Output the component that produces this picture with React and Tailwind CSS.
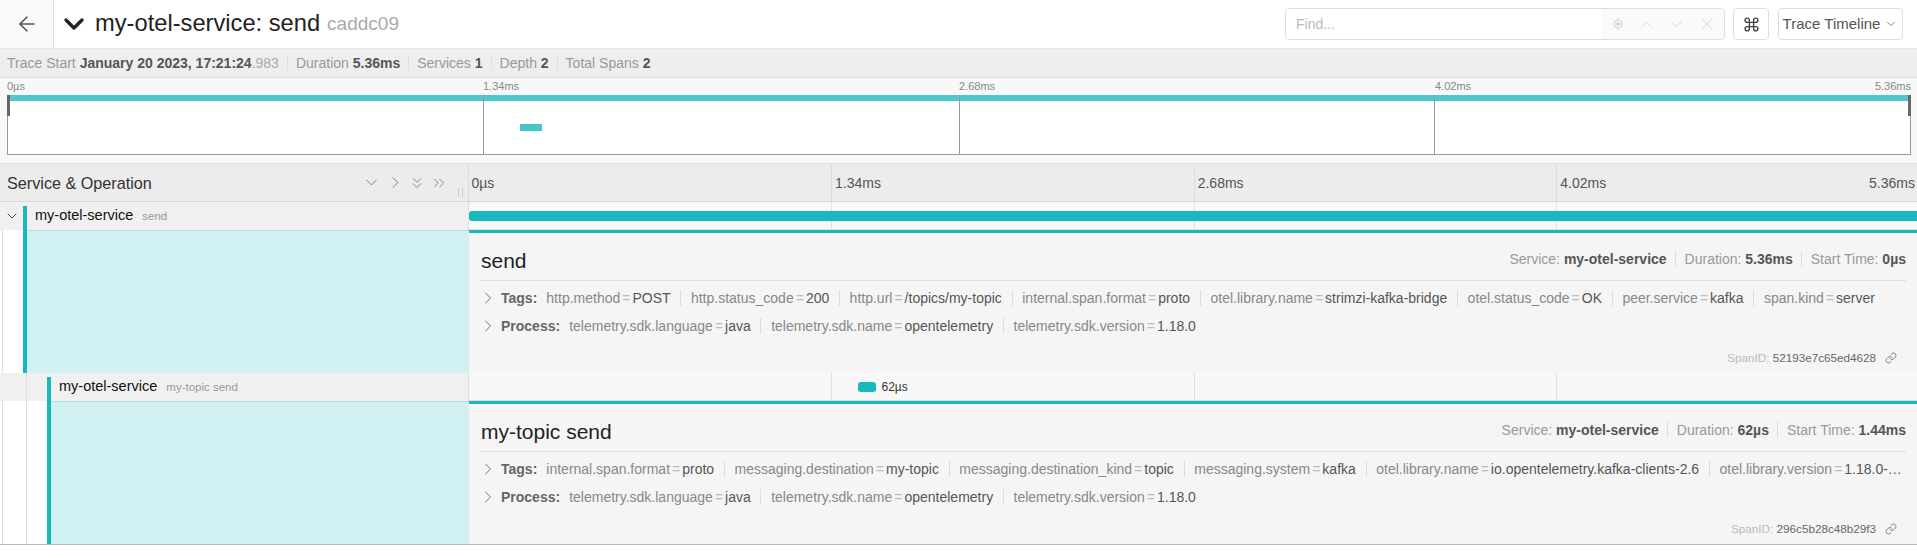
import React from 'react'
import { ChevronDown, ChevronRight, ChevronsDown, ChevronsRight, ChevronUp, X, ArrowLeft, Command, Link } from 'lucide-react'

const ticks = ['0µs', '1.34ms', '2.68ms', '4.02ms']

const spans = [
  {
    name: 'send',
    depth: 0,
    service: 'my-otel-service',
    duration: '5.36ms',
    start: '0µs',
    spanId: '52193e7c65ed4628',
    tags: [
      ['http.method', 'POST'],
      ['http.status_code', '200'],
      ['http.url', '/topics/my-topic'],
      ['internal.span.format', 'proto'],
      ['otel.library.name', 'strimzi-kafka-bridge'],
      ['otel.status_code', 'OK'],
      ['peer.service', 'kafka'],
      ['span.kind', 'server'],
    ],
  },
  {
    name: 'my-topic send',
    depth: 1,
    service: 'my-otel-service',
    duration: '62µs',
    start: '1.44ms',
    spanId: '296c5b28c48b29f3',
    tags: [
      ['internal.span.format', 'proto'],
      ['messaging.destination', 'my-topic'],
      ['messaging.destination_kind', 'topic'],
      ['messaging.system', 'kafka'],
      ['otel.library.name', 'io.opentelemetry.kafka-clients-2.6'],
      ['otel.library.version', '1.18.0-…'],
    ],
  },
]

const processTags = [
  ['telemetry.sdk.language', 'java'],
  ['telemetry.sdk.name', 'opentelemetry'],
  ['telemetry.sdk.version', '1.18.0'],
]

const Stat = ({ label, value, muted, last }) => (
  <span className={`px-[8px] first:pl-0 leading-[14px] ${last ? '' : 'border-r border-[#e0e0e0]'}`}>
    <span className="text-[#999]">{label} </span>
    <b className="font-bold text-[#555]">{value}</b>
    {muted && <span className="text-[#aaa]">{muted}</span>}
  </span>
)

const TickLines = ({ color = 'border-[#ddd]', col = 'flex-1' }) => (
  <div className="absolute inset-0 flex pointer-events-none">
    {ticks.map((t, i) => (
      <div key={t} className={`${col} ${i === 0 ? '' : `border-l ${color}`}`} />
    ))}
  </div>
)

const KeyValues = ({ label, items }) => (
  <div className="flex items-center h-[28px] text-[14px] leading-[16px]">
    <ChevronRight size={20} strokeWidth={1} className="text-[#555] shrink-0 ml-[-3px] mr-[3px]" />
    <b className="font-bold text-[#666] shrink-0 mr-[9px]">{label}:</b>
    <div className="flex min-w-0">
      {items.map(([k, v], i) => (
        <span
          key={k}
          className={`px-[9.7px] first:pl-0 whitespace-nowrap shrink-0 ${i === items.length - 1 ? '' : 'border-r border-[#ddd]'}`}
        >
          <span className="text-[#888]">{k}</span>
          <span className="text-[#bbb] mx-[2px]">=</span>
          <span className="text-[#555]">{v}</span>
        </span>
      ))}
    </div>
  </div>
)

const Overview = ({ label, value, last }) => (
  <span className={`px-[8.5px] leading-[16px] ${last ? 'pr-0' : 'border-r border-[#ddd]'}`}>
    <span className="text-[#999]">{label} </span>
    <b className="font-bold text-[#555]">{value}</b>
  </span>
)

const SpanRow = ({ span }) => (
  <>
    {/* row */}
    <div className="flex h-[28px]">
      <div className="w-[468.5px] shrink-0 h-full bg-[#f0f0f0] border-r border-[#ddd] flex relative">
        <div className="w-[23px] shrink-0 flex items-center justify-center relative">
          {span.depth === 0 && <ChevronDown size={16} strokeWidth={1.25} className="text-[#333]" />}
        </div>
        {span.depth > 0 && (
          <div className="w-[24px] shrink-0 border-l border-[#ddd] ml-[3px] mr-[-3px]" />
        )}
        <div className="flex-1 flex items-center">
          <div className="w-[4px] self-stretch mt-[4px] bg-[#17b8be]" />
          <span className="ml-[8px] text-[14.5px] text-[#111] mt-[-1px]">{span.service}</span>
          <span className="ml-[9px] text-[11.5px] text-[#999] mt-[1px]">{span.name}</span>
        </div>
      </div>
      <div className="flex-1 relative bg-[#f8f8f8] border-b border-[#ddd] overflow-hidden">
        <TickLines color="border-[#e2e2e2]" col="w-[362.6px] shrink-0" />
        {span.depth === 0 ? (
          <div className="absolute left-0 right-0 top-[9px] h-[10px] bg-[#17b8be] rounded-l-[3px]" />
        ) : (
          <div className="absolute left-[389px] top-[9px] flex items-center">
            <div className="w-[18px] h-[10px] bg-[#17b8be] rounded-[3px]" />
            <span className="ml-[6px] text-[12px] leading-[10px] text-[#333]">62µs</span>
          </div>
        )}
      </div>
    </div>
    {/* detail */}
    <div className="flex h-[143px]">
      <div className="w-[468.5px] shrink-0 flex">
        <div className={`${span.depth === 0 ? 'w-[23px]' : 'w-[47px]'} shrink-0 bg-white flex`}>
          <div className="w-[24px] border-l border-[#ddd] ml-[2px]" />
          {span.depth > 0 && <div className="w-[21px] border-l border-[#ddd]" />}
        </div>
        <div className="w-[4px] bg-[#17b8be]" />
        <div className="flex-1 bg-[#d1f1f3] border-t border-[#b5dde0]" />
      </div>
      <div className="flex-1 min-w-0 bg-[#f5f5f5] border-t-[3px] border-[#17b8be] pl-[12.5px] pr-[11px] flex flex-col">
        <div className="flex items-center justify-between h-[48px] pt-[5px] border-b border-[#ddd] shrink-0">
          <h2 className="text-[21px] text-[#222] leading-none mt-[2px]">{span.name}</h2>
          <div className="flex text-[14px]">
            <Overview label="Service:" value={span.service} />
            <Overview label="Duration:" value={span.duration} />
            <Overview label="Start Time:" value={span.start} last />
          </div>
        </div>
        <div className="pt-[3px]">
          <KeyValues label="Tags" items={span.tags} />
          <KeyValues label="Process" items={processTags} />
        </div>
        <div className="mt-auto mb-[8px] flex items-center justify-end text-[11.7px] leading-[14px]">
          <span className="text-[#bbb]">SpanID:&nbsp;</span>
          <span className="text-[#666]">{span.spanId}</span>
          <Link size={12} strokeWidth={1.25} className="text-[#444] ml-[9px] mr-[9px]" />
        </div>
      </div>
    </div>
  </>
)

export default function App() {
  return (
    <div className="bg-white min-h-screen overflow-hidden font-['Liberation_Sans',sans-serif]">
      {/* top nav */}
      <header className="h-[49px] flex items-center border-b border-[#e6e6e6] bg-white">
        <div className="w-[54px] h-full shrink-0 flex items-center justify-center bg-[#fafafa] border-r border-[#ddd]">
          <ArrowLeft size={24} strokeWidth={1.5} className="text-[#555]" />
        </div>
        <ChevronDown size={32} strokeWidth={2.5} className="text-[#222] ml-[4px]" />
        <h1 className="ml-[5px] text-[23.7px] text-[#222] font-normal leading-none">my-otel-service: send</h1>
        <span className="ml-[7px] text-[19px] text-[#aaa]">caddc09</span>
        <div className="ml-auto flex items-center mr-[14px]">
          <div className="w-[440px] h-[32px] flex border border-[#ddd] rounded-[4px] overflow-hidden">
            <div className="flex-1 bg-white text-[14px] text-[#bbb] pl-[10px] flex items-center">Find...</div>
            <div className="w-[121px] bg-[#fafafa] flex items-center justify-around px-[2px] text-[#ccc]">
              <svg width="14" height="14" viewBox="0 0 14 14" fill="none" stroke="currentColor">
                <circle cx="7" cy="7" r="4" />
                <circle cx="7" cy="7" r="1.8" fill="currentColor" stroke="none" />
                <path d="M7 0.5v2M7 11.5v2" />
              </svg>
              <ChevronUp size={19} strokeWidth={1} />
              <ChevronDown size={19} strokeWidth={1} />
              <X size={18} strokeWidth={1} />
            </div>
          </div>
          <button className="ml-[8px] w-[36px] h-[32px] border border-[#ddd] rounded-[4px] flex items-center justify-center bg-white">
            <Command size={17} strokeWidth={2} className="text-[#444]" />
          </button>
          <button className="ml-[9px] w-[125px] h-[32px] border border-[#ddd] rounded-[4px] flex items-center justify-center text-[15px] text-[#555] bg-white">
            Trace Timeline
            <ChevronDown size={14} strokeWidth={1.25} className="ml-[4px]" />
          </button>
        </div>
      </header>

      {/* stats */}
      <div className="h-[29px] flex items-center bg-[#eee] border-b border-[#e0e0e0] pl-[7px] text-[14px]">
        <Stat label="Trace Start" value="January 20 2023, 17:21:24" muted=".983" />
        <Stat label="Duration" value="5.36ms" />
        <Stat label="Services" value="1" />
        <Stat label="Depth" value="2" />
        <Stat label="Total Spans" value="2" last />
      </div>

      {/* minimap */}
      <div className="h-[86px] bg-[#f8f8f8] border-b border-[#ddd] px-[7px] pr-[6px]">
        <div className="flex h-[17px] items-center text-[11px] text-[#888]">
          <span className="flex-1">0µs</span>
          <span className="flex-1">1.34ms</span>
          <span className="flex-1">2.68ms</span>
          <span className="flex-1 flex justify-between">
            <span>4.02ms</span>
            <span>5.36ms</span>
          </span>
        </div>
        <div className="relative h-[60px] bg-white border-x border-b border-[#999]">
          <div className="absolute left-0 right-0 top-0 h-[6px] bg-[#4ec8cf]" />
          <div className="absolute left-[512px] top-[29px] w-[22px] h-[7px] bg-[#44c6cd]" />
          <TickLines color="border-[#999]" />
          <div className="absolute left-[-1px] top-0 w-[3px] h-[21px] bg-[#666]" />
          <div className="absolute right-[-1px] top-0 w-[3px] h-[21px] bg-[#666]" />
        </div>
      </div>

      {/* timeline header */}
      <div className="flex h-[38px] bg-[#ececec] border-b border-[#d8d8d8]">
        <div className="w-[468.5px] shrink-0 border-r border-[#ddd] flex items-center relative pl-[7px]">
          <span className="text-[16.2px] text-[#333] mt-[1px]">Service &amp; Operation</span>
          <div className="absolute left-[362px] top-[9px] flex items-center text-[#666]">
            <ChevronDown size={19} strokeWidth={1} />
            <ChevronRight size={19} strokeWidth={1} className="ml-[5px]" />
            <ChevronsDown size={18} strokeWidth={1} className="ml-[3px]" />
            <ChevronsRight size={18} strokeWidth={1} className="ml-[4px]" />
          </div>
          <div className="absolute left-[458px] top-[24px] w-[5px] h-[9px] border-x border-[#ccc]" />
        </div>
        <div className="flex-1 flex text-[14px] text-[#555] overflow-hidden">
          {ticks.map((t, i) => (
            <div key={t} className={`${i === 3 ? 'flex-1 pr-[2px]' : 'w-[362.6px] shrink-0'} flex items-center justify-between pl-[3px] mt-[1px] ${i === 0 ? '' : 'border-l border-[#ddd]'}`}>
              <span>{t}</span>
              {i === 3 && <span>5.36ms</span>}
            </div>
          ))}
        </div>
      </div>

      {/* span rows */}
      <div className="border-b border-[#bbb]">
        {spans.map((s) => (
          <SpanRow key={s.spanId} span={s} />
        ))}
      </div>
    </div>
  )
}
